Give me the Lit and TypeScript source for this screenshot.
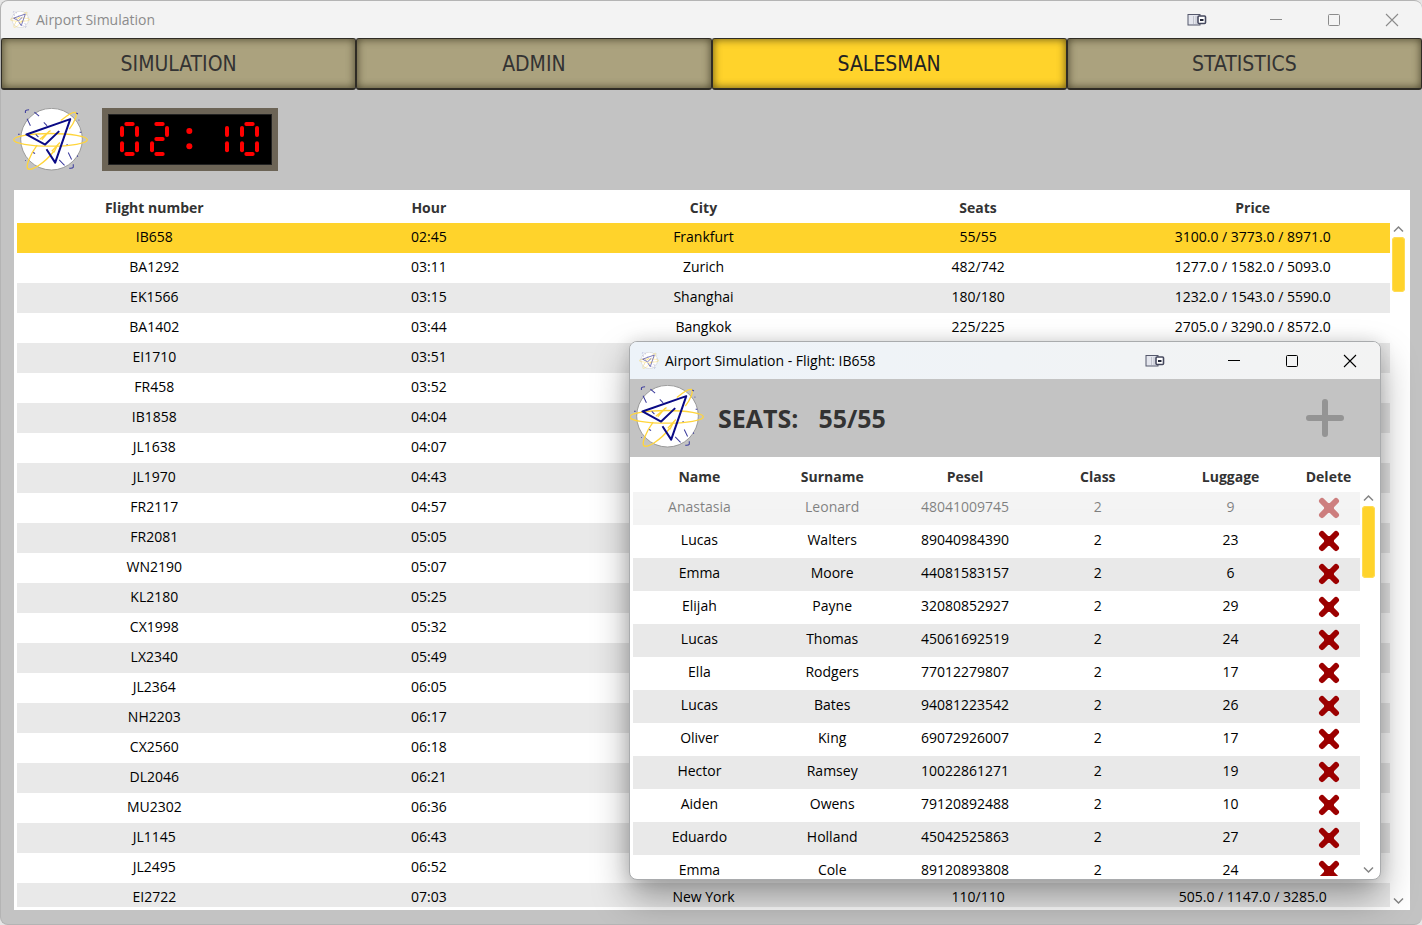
import { LitElement, html, svg, css } from "lit";
import { customElement, property, state } from "lit/decorators.js";
import { classMap } from "lit/directives/class-map.js";

type Flight = [string, string, string, string, string];
type Passenger = [string, string, string, string, string];

const FLIGHTS: Flight[] = [
  ["IB658", "02:45", "Frankfurt", "55/55", "3100.0 / 3773.0 / 8971.0"],
  ["BA1292", "03:11", "Zurich", "482/742", "1277.0 / 1582.0 / 5093.0"],
  ["EK1566", "03:15", "Shanghai", "180/180", "1232.0 / 1543.0 / 5590.0"],
  ["BA1402", "03:44", "Bangkok", "225/225", "2705.0 / 3290.0 / 8572.0"],
  ["EI1710", "03:51", "", "", ""],
  ["FR458", "03:52", "", "", ""],
  ["IB1858", "04:04", "", "", ""],
  ["JL1638", "04:07", "", "", ""],
  ["JL1970", "04:43", "", "", ""],
  ["FR2117", "04:57", "", "", ""],
  ["FR2081", "05:05", "", "", ""],
  ["WN2190", "05:07", "", "", ""],
  ["KL2180", "05:25", "", "", ""],
  ["CX1998", "05:32", "", "", ""],
  ["LX2340", "05:49", "", "", ""],
  ["JL2364", "06:05", "", "", ""],
  ["NH2203", "06:17", "", "", ""],
  ["CX2560", "06:18", "", "", ""],
  ["DL2046", "06:21", "", "", ""],
  ["MU2302", "06:36", "", "", ""],
  ["JL1145", "06:43", "", "", ""],
  ["JL2495", "06:52", "", "", ""],
  ["EI2722", "07:03", "New York", "110/110", "505.0 / 1147.0 / 3285.0"],
];

const PASSENGERS: Passenger[] = [
  ["Anastasia", "Leonard", "48041009745", "2", "9"],
  ["Lucas", "Walters", "89040984390", "2", "23"],
  ["Emma", "Moore", "44081583157", "2", "6"],
  ["Elijah", "Payne", "32080852927", "2", "29"],
  ["Lucas", "Thomas", "45061692519", "2", "24"],
  ["Ella", "Rodgers", "77012279807", "2", "17"],
  ["Lucas", "Bates", "94081223542", "2", "26"],
  ["Oliver", "King", "69072926007", "2", "17"],
  ["Hector", "Ramsey", "10022861271", "2", "19"],
  ["Aiden", "Owens", "79120892488", "2", "10"],
  ["Eduardo", "Holland", "45042525863", "2", "27"],
  ["Emma", "Cole", "89120893808", "2", "24"],
];

/** Paper plane over an orbit-ringed disc. */
@customElement("plane-logo")
class PlaneLogo extends LitElement {
  static styles = css`
    :host { display: block; flex: none; }
    svg { display: block; width: 100%; height: 100%; }
  `;
  render() {
    return html`<svg viewBox="12 25 224 188" aria-hidden="true">
      <circle cx="127" cy="118" r="92" fill="#fff" stroke="#8f8f8f" stroke-width="2.5" />
      <g fill="none" stroke="#ffd53c" stroke-width="4">
        <ellipse cx="124" cy="120" rx="110" ry="19" />
        <path d="M155 62 C172 48 190 36 198 38 C206 42 196 68 180 88 M84 136 C62 166 50 198 56 206 C66 214 104 192 134 154" />
        <path d="M92 118 L124 92 M98 120 L120 94 M128 154 L152 128 M134 158 L146 134" />
      </g>
      <g fill="none" stroke="#3a3a9c" stroke-width="3">
        <path d="M49 40 V34 Q50 30 60 30 M76 37 L90 49 M54 57 L64 78 M104 68 L114 78 M201 40 L206 43 M177 158 L187 179 M150 180 L166 196 M192 193 V202 Q190 206 180 205 M27 103 H32 M211 97 H216 M80 104 L88 112 M72 158 L78 161 M203 167 L206 170 M50 182 H48 M172 134 H175 M208 60 L210 62" />
      </g>
      <path d="M112 148 L138 188 L183 58 L52 104 L108 134 L150 94" fill="none" stroke="#0a0a85" stroke-width="6" stroke-linejoin="round" />
    </svg>`;
  }
}

const SEGMENTS: Record<string, string> = {
  "0": "abcdef", "1": "bc", "2": "abdeg", "3": "abcdg", "4": "bcfg",
  "5": "acdfg", "6": "acdefg", "7": "abc", "8": "abcdefg", "9": "abcdfg",
};
const SEGMENT_LINES: Record<string, [number, number, number, number]> = {
  a: [19, 6, 38, 6], b: [51, 18, 51, 39], c: [51, 64, 51, 85], d: [19, 96, 38, 96],
  e: [6, 64, 6, 85], f: [6, 18, 6, 39], g: [19, 51, 38, 51],
};

/** Seven-segment LED clock. */
@customElement("led-clock")
class LedClock extends LitElement {
  @property() value = "00:00";
  static styles = css`
    :host { display: block; flex: none; }
    .case { display: flex; gap: 11px; padding: 8px 13px 7px 12px; border: 6px solid #6c6456; background: #000; box-shadow: inset 0 0 0 1px #222; }
    .cell { display: block; width: 19px; height: 36px; stroke: #f00; stroke-width: 12; stroke-linecap: round; fill: #f00; }
  `;
  render() {
    return html`<div class="case" role="timer" aria-label=${this.value}>
      ${[...this.value].map((c) => html`<svg class="cell" viewBox="0 0 57 108">
        ${c === ":"
          ? svg`<circle cx="28" cy="27" r="9" stroke="none" /><circle cx="28" cy="73" r="9" stroke="none" />`
          : [...SEGMENTS[c]].map((s) => {
              const [x1, y1, x2, y2] = SEGMENT_LINES[s];
              return svg`<line x1=${x1} y1=${y1} x2=${x2} y2=${y2} />`;
            })}
      </svg>`)}
    </div>`;
  }
}

/** Caption bar with icon, title and window buttons. */
@customElement("title-bar")
class TitleBar extends LitElement {
  @property() caption = "";
  static styles = css`
    :host { display: flex; flex: none; align-items: center; height: 37px; padding-right: 1px; color: #000; }
    .icon { width: 20px; height: 17px; margin: 0 6px 0 9px; }
    .caption { flex: 1; font-size: 14px; line-height: 20px; }
    button { display: flex; align-items: center; justify-content: center; width: 58px; height: 36px; margin: 0; padding: 0; border: 0; background: none; color: inherit; }
    .dock { margin-right: 21px; }
    svg { display: block; fill: none; stroke: currentColor; }
  `;
  render() {
    return html`
      <plane-logo class="icon"></plane-logo>
      <span class="caption">${this.caption}</span>
      <button class="dock" aria-label="Move to display"><svg width="20" height="14" viewBox="0 0 20 14">
        <rect x="1" y="1.5" width="12" height="10.5" fill="#e4e6ee" stroke="#55586c" />
        <path d="M6.5 3 V11 M9 3 V11" stroke="#c0c2cc" />
        <rect x="11" y="3" width="7.5" height="7.5" rx="1" fill="#fff" stroke="#45485e" stroke-width="1.6" />
        <rect x="13" y="6" width="3.5" height="2" fill="#222639" stroke="none" />
      </svg></button>
      <button aria-label="Minimize"><svg width="14" height="14"><path d="M1 6.5 H13" /></svg></button>
      <button aria-label="Maximize"><svg width="14" height="14"><rect x="1.5" y="1.5" width="11" height="11" rx="1" /></svg></button>
      <button aria-label="Close"><svg width="14" height="14"><path d="M1 1 L13 13 M13 1 L1 13" stroke-width="1.1" /></svg></button>
    `;
  }
}

/** Vertical scroll bar with arrow ends. */
@customElement("scroll-rail")
class ScrollRail extends LitElement {
  static styles = css`
    :host { display: flex; flex: none; flex-direction: column; align-items: center; width: 17px; box-sizing: border-box; }
    button { display: block; margin: 0; padding: 0; border: 0; background: none; height: 12px; }
    svg { display: block; fill: none; stroke: #858585; stroke-width: 1.5; }
    .track { flex: 1; width: 13px; padding-top: 2px; }
    .thumb { height: var(--thumb); border-radius: 4px; background: #ffd32b; box-shadow: inset 0 0 0 1px #ffdc55; }
  `;
  render() {
    return html`
      <button aria-label="Scroll up"><svg width="11" height="12"><path d="M1 8.5 L5.5 4 L10 8.5" /></svg></button>
      <div class="track"><div class="thumb"></div></div>
      <button aria-label="Scroll down"><svg width="11" height="12"><path d="M1 3.5 L5.5 8 L10 3.5" /></svg></button>
    `;
  }
}

@customElement("passenger-window")
class PassengerWindow extends LitElement {
  static styles = css`
    :host { display: flex; flex-direction: column; box-sizing: border-box; overflow: hidden; border: 1px solid #a9abad; border-radius: 8px; background: #fff; }
    .title { background: linear-gradient(90deg, #edf3f9, #f3f3f3); }
    .bar { display: flex; flex: none; align-items: center; height: 78px; background: #c3c3c3; color: #333; }
    .logo { width: 75px; height: 63px; margin: 0 0 4px -1px; }
    .seats { display: flex; gap: 20px; flex: 1; margin: 0 0 0 14px; font-size: 25px; line-height: 32px; font-weight: 700; }
    .add { margin: 0 36px 0 0; padding: 0; border: 0; background: none; }
    .add svg { display: block; stroke: #949494; stroke-width: 6; stroke-linecap: round; }
    .body { display: flex; flex: 1; min-height: 0; padding: 2px 3px 3px; }
    .view { flex: 1; min-width: 0; overflow: hidden; }
    table { width: 100%; border-collapse: collapse; table-layout: fixed; text-align: center; font-size: 14px; line-height: 20px; }
    th { height: 31px; padding: 2px 0 0; color: #333; font-weight: 700; }
    td { height: 29px; padding: 0 0 4px; }
    .remove-col { width: 63px; }
    tbody tr:nth-child(odd) { background: #e9e9e9; }
    .off { opacity: 0.5; }
    .remove { display: block; margin: 0 auto; padding: 2px 0 0; border: 0; background: none; }
    .remove svg { display: block; stroke: #9c0000; stroke-width: 6; stroke-linecap: round; }
    .rail { --thumb: 72px; padding-top: 33px; }
  `;
  render() {
    return html`
      <title-bar class="title" caption="Airport Simulation - Flight: IB658"></title-bar>
      <header class="bar">
        <plane-logo class="logo"></plane-logo>
        <p class="seats"><span>SEATS:</span><span>55/55</span></p>
        <button class="add" aria-label="Add passenger" disabled>
          <svg width="38" height="38"><path d="M19 3 V35 M3 19 H35" /></svg>
        </button>
      </header>
      <div class="body">
        <div class="view">
          <table>
            <thead><tr><th>Name</th><th>Surname</th><th>Pesel</th><th>Class</th><th>Luggage</th><th class="remove-col">Delete</th></tr></thead>
            <tbody>
              ${PASSENGERS.map((p, i) => html`<tr class=${classMap({ off: i === 0 })}>
                ${p.map((v) => html`<td>${v}</td>`)}
                <td><button class="remove" aria-label="Delete ${p[0]} ${p[1]}" ?disabled=${i === 0}>
                  <svg width="22" height="22"><path d="M4 4 L18 18 M18 4 L4 18" /><circle cx="11" cy="11" r="5" fill="#9c0000" stroke="none" /></svg>
                </button></td>
              </tr>`)}
            </tbody>
          </table>
        </div>
        <scroll-rail class="rail"></scroll-rail>
      </div>
    `;
  }
}

@customElement("app-root")
class AppRoot extends LitElement {
  @state() private tab = "SALESMAN";
  @state() private selected = "IB658";
  static styles = css`
    :host { display: block; height: 100vh; background: #e6e6e6; font-family: "Open Sans", "Noto Sans", sans-serif; color: #000; }
    .window { position: relative; display: flex; flex-direction: column; box-sizing: border-box; height: 100%; overflow: hidden; border: 1px solid #b4b4b4; border-right: 0; border-radius: 8px; background: #c3c3c3; }
    .title { background: #f3f3f3; color: #8b8b8b; }
    .tabs { display: grid; grid-template-columns: repeat(4, 1fr); flex: none; }
    .tab { height: 52px; margin: 0; padding: 0; border: 1px solid #2f2c25; border-bottom-width: 2px; border-radius: 3px; background: #aba27e; box-shadow: inset 0 0 8px rgba(40, 35, 15, 0.75); color: #333; font-family: "DejaVu Sans Condensed", "DejaVu Sans", sans-serif; font-size: 21px; line-height: 28px; }
    .tab.active { background: #ffd32b; color: #222; }
    .head { display: flex; flex: none; gap: 14px; padding: 18px 12px 19px; }
    .logo { width: 75px; height: 63px; }
    .panel { display: flex; flex: 1; min-height: 0; margin: 0 12px 14px 13px; padding: 0 3px 3px; background: #fff; }
    .view { flex: 1; min-width: 0; overflow: hidden; }
    table { width: 100%; border-collapse: collapse; table-layout: fixed; text-align: center; font-size: 14px; line-height: 20px; }
    th { height: 31px; padding: 2px 0 0; color: #333; font-weight: 700; }
    td { height: 28px; padding: 0 0 2px; }
    tbody tr:nth-child(odd) { background: #e9e9e9; }
    tbody tr.selected { background: #ffd32b; }
    .rail { --thumb: 55px; padding-top: 33px; }
    .popup { position: absolute; top: 340px; right: 41px; bottom: 44px; width: 752px; box-shadow: 0 18px 36px rgba(0, 0, 0, 0.36), 0 0 16px rgba(0, 0, 0, 0.12); }
  `;
  render() {
    return html`<main class="window">
      <title-bar class="title" caption="Airport Simulation"></title-bar>
      <nav class="tabs">
        ${["SIMULATION", "ADMIN", "SALESMAN", "STATISTICS"].map((t) => html`<button
          class=${classMap({ tab: true, active: t === this.tab })}
          @click=${() => (this.tab = t)}>${t}</button>`)}
      </nav>
      <header class="head">
        <plane-logo class="logo"></plane-logo>
        <led-clock value="02:10"></led-clock>
      </header>
      <section class="panel">
        <div class="view">
          <table>
            <thead><tr><th>Flight number</th><th>Hour</th><th>City</th><th>Seats</th><th>Price</th></tr></thead>
            <tbody>
              ${FLIGHTS.map((f) => html`<tr
                class=${classMap({ selected: f[0] === this.selected })}
                @click=${() => (this.selected = f[0])}>${f.map((v) => html`<td>${v}</td>`)}</tr>`)}
            </tbody>
          </table>
        </div>
        <scroll-rail class="rail"></scroll-rail>
      </section>
      <passenger-window class="popup"></passenger-window>
    </main>`;
  }
}
